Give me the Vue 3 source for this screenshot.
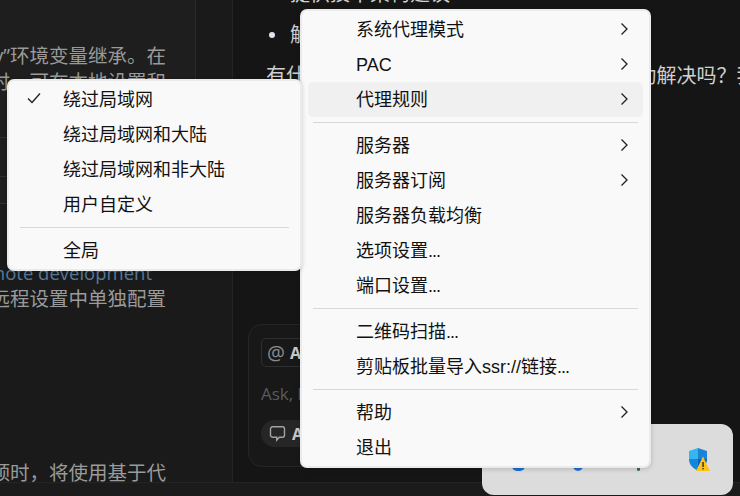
<script setup>
const mainItems = [
  { label: '系统代理模式', sub: true },
  { label: 'PAC', sub: true },
  { label: '代理规则', sub: true, active: true },
  { sep: true },
  { label: '服务器', sub: true },
  { label: '服务器订阅', sub: true },
  { label: '服务器负载均衡' },
  { label: '选项设置', dots: true },
  { label: '端口设置', dots: true },
  { sep: true },
  { label: '二维码扫描', dots: true },
  { label: '剪贴板批量导入ssr://链接', dots: true },
  { sep: true },
  { label: '帮助', sub: true },
  { label: '退出' }
]
const subItems = [
  { label: '绕过局域网', checked: true },
  { label: '绕过局域网和大陆' },
  { label: '绕过局域网和非大陆' },
  { label: '用户自定义' },
  { sep: true },
  { label: '全局' }
]
</script>

<template>
  <div class="screen">
    <div class="panes">
      <aside class="left">
        <div class="settings-pane"></div>
        <div class="hline h1"></div>
        <div class="hline h2"></div>
        <div class="hline h3"></div>
        <p class="line l1">y”环境变量继承。在</p>
        <p class="line l2">时，可在本地设置和</p>
        <p class="line l3">mote development</p>
        <p class="line l4">远程设置中单独配置</p>
        <p class="line l5">预时，将使用基于代</p>
      </aside>
      <main class="right">
        <p class="r0">提供技术架构建议</p>
        <p class="r1"><span class="dot"></span>解决问题</p>
        <p class="r2">有什么具体的开发问题 或项目需求 需要帮助解决吗？我</p>
        <div class="composer">
          <div class="chip-at"><span class="at">@</span><b>Add</b></div>
          <div class="ask">Ask, learn</div>
          <div class="chip-ask">
            <svg width="17" height="17" viewBox="0 0 17 17" fill="none" stroke="#a3a3a3" stroke-width="1.4"><path d="M3.500 1.800h10a2 2 0 0 1 2 2v6.400a2 2 0 0 1-2 2h-3.200l-2.600 2.900v-2.900H3.500a2 2 0 0 1-2-2V3.800a2 2 0 0 1 2-2z"/></svg>
            <b>Ask</b>
          </div>
        </div>
      </main>
    </div>
    <div class="status"></div>

    <div class="tray">
      <svg class="tray-shield" width="25" height="25" viewBox="0 0 25 25">
        <path d="M12 1 L3 4 V12 H12Z" fill="#35b6f4"/>
        <path d="M12 1 L21 4 V12 H12Z" fill="#1b84d8"/>
        <path d="M12 12 H21 C21 18 17 21 12 24Z" fill="#0f5fb4"/>
        <path d="M3 12 H12 V24 C7 21 3 18 3 12Z" fill="#1485dc"/>
        <path d="M17 9.500 L24 24 H10Z" fill="#fcc419"/>
        <rect x="16.400" y="15" width="1.300" height="5" fill="#222"/>
        <rect x="16.400" y="21" width="1.300" height="1.400" fill="#222"/>
      </svg>
      <span class="peek p1"></span>
      <span class="peek p2"></span>
      <span class="peek p3"></span>
    </div>

    <div class="menu main-menu">
      <template v-for="(item, i) in mainItems" :key="i">
        <div v-if="item.sep" class="sep"></div>
        <div v-else class="row" :class="{ active: item.active }">
          <span class="label">{{ item.label }}<span v-if="item.dots" class="dots">...</span></span>
          <svg v-if="item.sub" class="caret" width="10" height="14" viewBox="0 0 10 14" fill="none" stroke="#1f1f1f" stroke-width="1.300"><path d="M2.500 1.500 L8 7 L2.500 12.500"/></svg>
        </div>
      </template>
    </div>

    <div class="menu sub-menu">
      <template v-for="(item, i) in subItems" :key="i">
        <div v-if="item.sep" class="sep"></div>
        <div v-else class="row">
          <svg v-if="item.checked" class="check" width="14" height="12" viewBox="0 0 14 12" fill="none" stroke="#1f1f1f" stroke-width="1.300"><path d="M1 6.500 L5 10.500 L13 1.500"/></svg>
          <span class="label">{{ item.label }}</span>
        </div>
      </template>
    </div>
  </div>
</template>

<style scoped>
.screen {
  position: relative;
  width: 740px;
  height: 496px;
  overflow: hidden;
  background: #181818;
  font-family: "Open Sans", "Noto Sans CJK SC", sans-serif;
}
p { margin: 0; white-space: nowrap; }
.panes { display: flex; height: 482px; }
.left {
  position: relative;
  width: 232px;
  flex: none;
  background: #1a1a1a;
  border-right: 1px solid #242424;
  overflow: hidden;
  color: #9a9a9a;
  font-size: 19.500px;
}
.settings-pane {
  position: absolute;
  left: 0;
  top: 0;
  width: 195px;
  height: 203px;
  background: #1e1e1e;
  border-right: 1px solid #2a2a2a;
}
.hline { position: absolute; left: 0; width: 195px; height: 1px; background: #303030; }
.h1 { top: 137px; }
.h2 { top: 176px; }
.h3 { top: 203px; }
.line { position: absolute; right: 66px; line-height: 26px; }
.l1 { top: 43px; }
.l2 { top: 69px; }
.l3 { top: 260px; right: 80px; color: #56799c; font-size: 18.500px; }
.l4 { top: 286px; }
.l5 { top: 460px; }
.right {
  position: relative;
  flex: 1;
  background: #151515;
  color: #d0d0d0;
  font-size: 20px;
  overflow: hidden;
}
.r0 { position: absolute; left: 57px; top: -19px; line-height: 26px; }
.r1 { position: absolute; left: 36px; top: 22px; line-height: 26px; display: flex; align-items: center; gap: 15px; }
.dot { width: 6px; height: 6px; border-radius: 50%; background: #dbe3ee; }
.r2 { position: absolute; left: 33px; top: 63px; line-height: 26px; }
.composer {
  position: absolute;
  left: 15px;
  top: 324px;
  width: 380px;
  height: 143px;
  box-sizing: border-box;
  padding: 13px 12px;
  border: 1px solid #262626;
  border-radius: 14px;
  background: #181818;
}
.chip-at {
  display: inline-flex;
  align-items: center;
  gap: 5px;
  height: 27px;
  padding: 0 5px;
  border: 1px solid #2f2f2f;
  border-radius: 5px;
  color: #c8c8c8;
  font-size: 16px;
}
.at { color: #8a8a8a; font-size: 20px; line-height: 20px; }
.ask { margin-top: 9px; height: 36px; line-height: 36px; color: #5a5a5a; font-size: 17px; }
.chip-ask {
  margin-top: 8px;
  display: inline-flex;
  align-items: center;
  gap: 6px;
  height: 27px;
  padding: 0 8px;
  border-radius: 14px;
  background: #262626;
  color: #c8c8c8;
  font-size: 16px;
}
.status { height: 14px; background: #1b1b1b; border-top: 1px solid #242424; box-sizing: border-box; }
.tray {
  position: absolute;
  left: 482px;
  top: 424px;
  width: 251px;
  height: 71px;
  border-radius: 12px;
  background: #dcdcdc;
}
.tray-shield { position: absolute; left: 204px; top: 23px; }
.peek {
  position: absolute;
  top: 42px;
  width: 13px;
  height: 5px;
  border-radius: 0 0 7px 7px;
  background: #1f6fd0;
}
.p1 { left: 30px; }
.p2 { left: 91px; width: 10px; }
.p3 { left: 155px; width: 3px; background: #3a6a6a; }
.menu {
  position: absolute;
  box-sizing: border-box;
  background: #f9f9f9;
  border: 2px solid #ebebeb;
  border-radius: 7px;
  padding: 1px 6px;
  color: #111;
  font-family: "Liberation Sans", "Noto Sans CJK SC", sans-serif;
  font-size: 18px;
  box-shadow: 0 1px 5px rgba(0, 0, 0, 0.18);
}
.main-menu { left: 300px; top: 9px; width: 351px; height: 459px; }
.sub-menu { left: 7px; top: 79px; width: 295px; height: 192px; }
.row {
  position: relative;
  box-sizing: border-box;
  height: 35px;
  display: flex;
  align-items: center;
  padding: 1px 0 0 48px;
  border-radius: 5px;
}
.active { background: #f0f0f0; }
.label { line-height: 24px; white-space: nowrap; }
.dots { letter-spacing: -1px; }
.caret { position: absolute; right: 14px; top: 10px; }
.check { position: absolute; left: 12px; top: 10px; }
.sep { height: 1px; margin: 5px 5px; background: #d8d8d8; }
</style>
